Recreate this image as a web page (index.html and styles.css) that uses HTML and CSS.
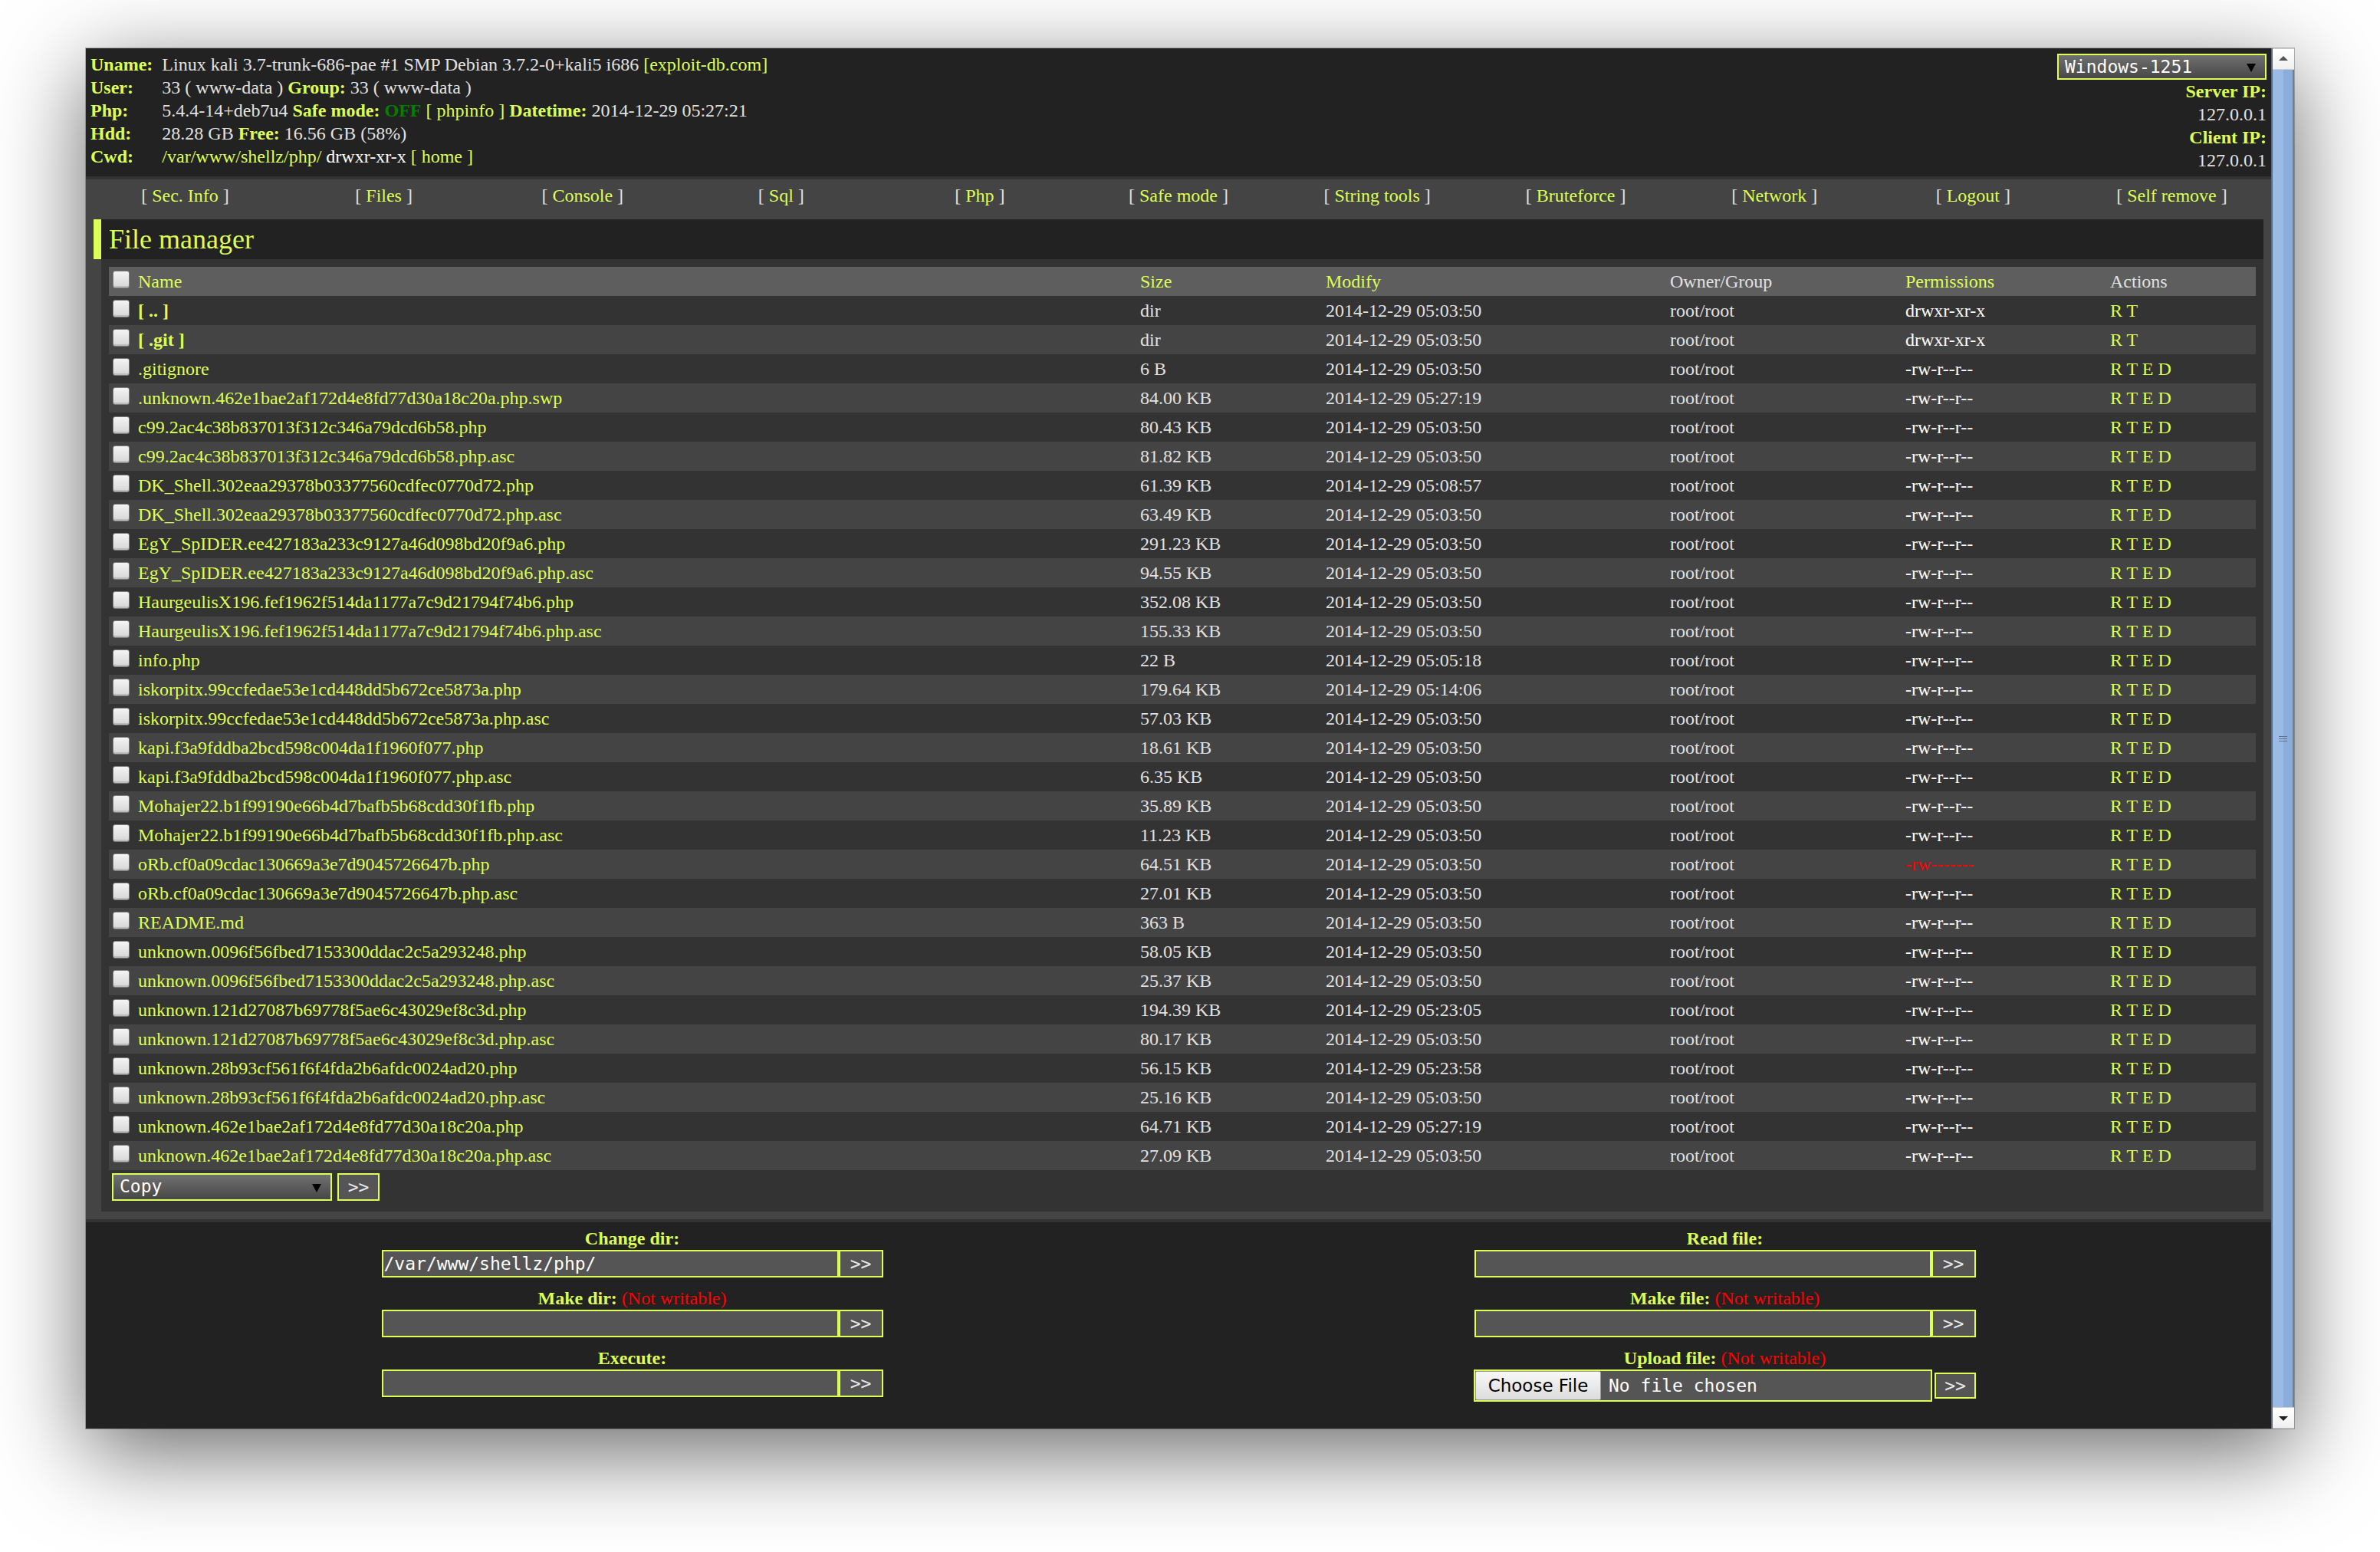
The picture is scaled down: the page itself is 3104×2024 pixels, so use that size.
FILE: index.html
```html
<!DOCTYPE html>
<html>
<head>
<meta charset="utf-8">
<title>WSO</title>
<link rel="stylesheet" href="styles.css">
</head>
<body>
<div class="window">
  <div class="page">
    <div class="info">
      <div class="labels">
        <span class="k">Uname:</span><br><span class="k">User:</span><br><span class="k">Php:</span><br><span class="k">Hdd:</span><br><span class="k">Cwd:</span>
      </div>
      <div class="vals">
        <div>Linux kali 3.7-trunk-686-pae #1 SMP Debian 3.7.2-0+kali5 i686 <a href="#">[exploit-db.com]</a></div>
        <div>33 ( www-data ) <span class="k">Group:</span> 33 ( www-data )</div>
        <div>5.4.4-14+deb7u4 <span class="k">Safe mode:</span> <b class="off">OFF</b> <a href="#">[ phpinfo ]</a> <span class="k">Datetime:</span> 2014-12-29 05:27:21</div>
        <div>28.28 GB <span class="k">Free:</span> 16.56 GB (58%)</div>
        <div><a href="#">/var/</a><a href="#">www/</a><a href="#">shellz/</a><a href="#">php/</a> <span class="wt">drwxr-xr-x</span> <a href="#">[ home ]</a></div>
      </div>
      <div class="right">
        <div class="sel charset">Windows-1251<i class="arr"></i></div>
        <div class="k">Server IP:</div>
        <div>127.0.0.1</div>
        <div class="k">Client IP:</div>
        <div>127.0.0.1</div>
      </div>
    </div>

    <nav class="menu">
      <div>[ <a href="#">Sec. Info</a> ]</div>
      <div>[ <a href="#">Files</a> ]</div>
      <div>[ <a href="#">Console</a> ]</div>
      <div>[ <a href="#">Sql</a> ]</div>
      <div>[ <a href="#">Php</a> ]</div>
      <div>[ <a href="#">Safe mode</a> ]</div>
      <div>[ <a href="#">String tools</a> ]</div>
      <div>[ <a href="#">Bruteforce</a> ]</div>
      <div>[ <a href="#">Network</a> ]</div>
      <div>[ <a href="#">Logout</a> ]</div>
      <div>[ <a href="#">Self remove</a> ]</div>
    </nav>

    <div class="wrap">
      <h1>File manager</h1>
      <div class="content">
        <table class="main">
          <colgroup>
            <col class="c-chk"><col class="c-name"><col class="c-size"><col class="c-mod"><col class="c-own"><col class="c-perm"><col class="c-act">
          </colgroup>
          <thead>
            <tr><th><input type="checkbox" class="chk"></th><th><a href="#">Name</a></th><th><a href="#">Size</a></th><th><a href="#">Modify</a></th><th>Owner/Group</th><th><a href="#">Permissions</a></th><th>Actions</th></tr>
          </thead>
          <tbody>
            <tr class="l2"><td><input type="checkbox" class="chk"></td><td><a href="#"><b>[ .. ]</b></a></td><td>dir</td><td>2014-12-29 05:03:50</td><td>root/root</td><td><a href="#" class="pw">drwxr-xr-x</a></td><td><a href="#">R</a> <a href="#">T</a></td></tr>
            <tr class="l1"><td><input type="checkbox" class="chk"></td><td><a href="#"><b>[ .git ]</b></a></td><td>dir</td><td>2014-12-29 05:03:50</td><td>root/root</td><td><a href="#" class="pw">drwxr-xr-x</a></td><td><a href="#">R</a> <a href="#">T</a></td></tr>
            <tr class="l2"><td><input type="checkbox" class="chk"></td><td><a href="#">.gitignore</a></td><td>6 B</td><td>2014-12-29 05:03:50</td><td>root/root</td><td><a href="#" class="pw">-rw-r--r--</a></td><td><a href="#">R</a> <a href="#">T</a> <a href="#">E</a> <a href="#">D</a></td></tr>
            <tr class="l1"><td><input type="checkbox" class="chk"></td><td><a href="#">.unknown.462e1bae2af172d4e8fd77d30a18c20a.php.swp</a></td><td>84.00 KB</td><td>2014-12-29 05:27:19</td><td>root/root</td><td><a href="#" class="pw">-rw-r--r--</a></td><td><a href="#">R</a> <a href="#">T</a> <a href="#">E</a> <a href="#">D</a></td></tr>
            <tr class="l2"><td><input type="checkbox" class="chk"></td><td><a href="#">c99.2ac4c38b837013f312c346a79dcd6b58.php</a></td><td>80.43 KB</td><td>2014-12-29 05:03:50</td><td>root/root</td><td><a href="#" class="pw">-rw-r--r--</a></td><td><a href="#">R</a> <a href="#">T</a> <a href="#">E</a> <a href="#">D</a></td></tr>
            <tr class="l1"><td><input type="checkbox" class="chk"></td><td><a href="#">c99.2ac4c38b837013f312c346a79dcd6b58.php.asc</a></td><td>81.82 KB</td><td>2014-12-29 05:03:50</td><td>root/root</td><td><a href="#" class="pw">-rw-r--r--</a></td><td><a href="#">R</a> <a href="#">T</a> <a href="#">E</a> <a href="#">D</a></td></tr>
            <tr class="l2"><td><input type="checkbox" class="chk"></td><td><a href="#">DK_Shell.302eaa29378b03377560cdfec0770d72.php</a></td><td>61.39 KB</td><td>2014-12-29 05:08:57</td><td>root/root</td><td><a href="#" class="pw">-rw-r--r--</a></td><td><a href="#">R</a> <a href="#">T</a> <a href="#">E</a> <a href="#">D</a></td></tr>
            <tr class="l1"><td><input type="checkbox" class="chk"></td><td><a href="#">DK_Shell.302eaa29378b03377560cdfec0770d72.php.asc</a></td><td>63.49 KB</td><td>2014-12-29 05:03:50</td><td>root/root</td><td><a href="#" class="pw">-rw-r--r--</a></td><td><a href="#">R</a> <a href="#">T</a> <a href="#">E</a> <a href="#">D</a></td></tr>
            <tr class="l2"><td><input type="checkbox" class="chk"></td><td><a href="#">EgY_SpIDER.ee427183a233c9127a46d098bd20f9a6.php</a></td><td>291.23 KB</td><td>2014-12-29 05:03:50</td><td>root/root</td><td><a href="#" class="pw">-rw-r--r--</a></td><td><a href="#">R</a> <a href="#">T</a> <a href="#">E</a> <a href="#">D</a></td></tr>
            <tr class="l1"><td><input type="checkbox" class="chk"></td><td><a href="#">EgY_SpIDER.ee427183a233c9127a46d098bd20f9a6.php.asc</a></td><td>94.55 KB</td><td>2014-12-29 05:03:50</td><td>root/root</td><td><a href="#" class="pw">-rw-r--r--</a></td><td><a href="#">R</a> <a href="#">T</a> <a href="#">E</a> <a href="#">D</a></td></tr>
            <tr class="l2"><td><input type="checkbox" class="chk"></td><td><a href="#">HaurgeulisX196.fef1962f514da1177a7c9d21794f74b6.php</a></td><td>352.08 KB</td><td>2014-12-29 05:03:50</td><td>root/root</td><td><a href="#" class="pw">-rw-r--r--</a></td><td><a href="#">R</a> <a href="#">T</a> <a href="#">E</a> <a href="#">D</a></td></tr>
            <tr class="l1"><td><input type="checkbox" class="chk"></td><td><a href="#">HaurgeulisX196.fef1962f514da1177a7c9d21794f74b6.php.asc</a></td><td>155.33 KB</td><td>2014-12-29 05:03:50</td><td>root/root</td><td><a href="#" class="pw">-rw-r--r--</a></td><td><a href="#">R</a> <a href="#">T</a> <a href="#">E</a> <a href="#">D</a></td></tr>
            <tr class="l2"><td><input type="checkbox" class="chk"></td><td><a href="#">info.php</a></td><td>22 B</td><td>2014-12-29 05:05:18</td><td>root/root</td><td><a href="#" class="pw">-rw-r--r--</a></td><td><a href="#">R</a> <a href="#">T</a> <a href="#">E</a> <a href="#">D</a></td></tr>
            <tr class="l1"><td><input type="checkbox" class="chk"></td><td><a href="#">iskorpitx.99ccfedae53e1cd448dd5b672ce5873a.php</a></td><td>179.64 KB</td><td>2014-12-29 05:14:06</td><td>root/root</td><td><a href="#" class="pw">-rw-r--r--</a></td><td><a href="#">R</a> <a href="#">T</a> <a href="#">E</a> <a href="#">D</a></td></tr>
            <tr class="l2"><td><input type="checkbox" class="chk"></td><td><a href="#">iskorpitx.99ccfedae53e1cd448dd5b672ce5873a.php.asc</a></td><td>57.03 KB</td><td>2014-12-29 05:03:50</td><td>root/root</td><td><a href="#" class="pw">-rw-r--r--</a></td><td><a href="#">R</a> <a href="#">T</a> <a href="#">E</a> <a href="#">D</a></td></tr>
            <tr class="l1"><td><input type="checkbox" class="chk"></td><td><a href="#">kapi.f3a9fddba2bcd598c004da1f1960f077.php</a></td><td>18.61 KB</td><td>2014-12-29 05:03:50</td><td>root/root</td><td><a href="#" class="pw">-rw-r--r--</a></td><td><a href="#">R</a> <a href="#">T</a> <a href="#">E</a> <a href="#">D</a></td></tr>
            <tr class="l2"><td><input type="checkbox" class="chk"></td><td><a href="#">kapi.f3a9fddba2bcd598c004da1f1960f077.php.asc</a></td><td>6.35 KB</td><td>2014-12-29 05:03:50</td><td>root/root</td><td><a href="#" class="pw">-rw-r--r--</a></td><td><a href="#">R</a> <a href="#">T</a> <a href="#">E</a> <a href="#">D</a></td></tr>
            <tr class="l1"><td><input type="checkbox" class="chk"></td><td><a href="#">Mohajer22.b1f99190e66b4d7bafb5b68cdd30f1fb.php</a></td><td>35.89 KB</td><td>2014-12-29 05:03:50</td><td>root/root</td><td><a href="#" class="pw">-rw-r--r--</a></td><td><a href="#">R</a> <a href="#">T</a> <a href="#">E</a> <a href="#">D</a></td></tr>
            <tr class="l2"><td><input type="checkbox" class="chk"></td><td><a href="#">Mohajer22.b1f99190e66b4d7bafb5b68cdd30f1fb.php.asc</a></td><td>11.23 KB</td><td>2014-12-29 05:03:50</td><td>root/root</td><td><a href="#" class="pw">-rw-r--r--</a></td><td><a href="#">R</a> <a href="#">T</a> <a href="#">E</a> <a href="#">D</a></td></tr>
            <tr class="l1"><td><input type="checkbox" class="chk"></td><td><a href="#">oRb.cf0a09cdac130669a3e7d9045726647b.php</a></td><td>64.51 KB</td><td>2014-12-29 05:03:50</td><td>root/root</td><td><a href="#" class="pw red">-rw-------</a></td><td><a href="#">R</a> <a href="#">T</a> <a href="#">E</a> <a href="#">D</a></td></tr>
            <tr class="l2"><td><input type="checkbox" class="chk"></td><td><a href="#">oRb.cf0a09cdac130669a3e7d9045726647b.php.asc</a></td><td>27.01 KB</td><td>2014-12-29 05:03:50</td><td>root/root</td><td><a href="#" class="pw">-rw-r--r--</a></td><td><a href="#">R</a> <a href="#">T</a> <a href="#">E</a> <a href="#">D</a></td></tr>
            <tr class="l1"><td><input type="checkbox" class="chk"></td><td><a href="#">README.md</a></td><td>363 B</td><td>2014-12-29 05:03:50</td><td>root/root</td><td><a href="#" class="pw">-rw-r--r--</a></td><td><a href="#">R</a> <a href="#">T</a> <a href="#">E</a> <a href="#">D</a></td></tr>
            <tr class="l2"><td><input type="checkbox" class="chk"></td><td><a href="#">unknown.0096f56fbed7153300ddac2c5a293248.php</a></td><td>58.05 KB</td><td>2014-12-29 05:03:50</td><td>root/root</td><td><a href="#" class="pw">-rw-r--r--</a></td><td><a href="#">R</a> <a href="#">T</a> <a href="#">E</a> <a href="#">D</a></td></tr>
            <tr class="l1"><td><input type="checkbox" class="chk"></td><td><a href="#">unknown.0096f56fbed7153300ddac2c5a293248.php.asc</a></td><td>25.37 KB</td><td>2014-12-29 05:03:50</td><td>root/root</td><td><a href="#" class="pw">-rw-r--r--</a></td><td><a href="#">R</a> <a href="#">T</a> <a href="#">E</a> <a href="#">D</a></td></tr>
            <tr class="l2"><td><input type="checkbox" class="chk"></td><td><a href="#">unknown.121d27087b69778f5ae6c43029ef8c3d.php</a></td><td>194.39 KB</td><td>2014-12-29 05:23:05</td><td>root/root</td><td><a href="#" class="pw">-rw-r--r--</a></td><td><a href="#">R</a> <a href="#">T</a> <a href="#">E</a> <a href="#">D</a></td></tr>
            <tr class="l1"><td><input type="checkbox" class="chk"></td><td><a href="#">unknown.121d27087b69778f5ae6c43029ef8c3d.php.asc</a></td><td>80.17 KB</td><td>2014-12-29 05:03:50</td><td>root/root</td><td><a href="#" class="pw">-rw-r--r--</a></td><td><a href="#">R</a> <a href="#">T</a> <a href="#">E</a> <a href="#">D</a></td></tr>
            <tr class="l2"><td><input type="checkbox" class="chk"></td><td><a href="#">unknown.28b93cf561f6f4fda2b6afdc0024ad20.php</a></td><td>56.15 KB</td><td>2014-12-29 05:23:58</td><td>root/root</td><td><a href="#" class="pw">-rw-r--r--</a></td><td><a href="#">R</a> <a href="#">T</a> <a href="#">E</a> <a href="#">D</a></td></tr>
            <tr class="l1"><td><input type="checkbox" class="chk"></td><td><a href="#">unknown.28b93cf561f6f4fda2b6afdc0024ad20.php.asc</a></td><td>25.16 KB</td><td>2014-12-29 05:03:50</td><td>root/root</td><td><a href="#" class="pw">-rw-r--r--</a></td><td><a href="#">R</a> <a href="#">T</a> <a href="#">E</a> <a href="#">D</a></td></tr>
            <tr class="l2"><td><input type="checkbox" class="chk"></td><td><a href="#">unknown.462e1bae2af172d4e8fd77d30a18c20a.php</a></td><td>64.71 KB</td><td>2014-12-29 05:27:19</td><td>root/root</td><td><a href="#" class="pw">-rw-r--r--</a></td><td><a href="#">R</a> <a href="#">T</a> <a href="#">E</a> <a href="#">D</a></td></tr>
            <tr class="l1"><td><input type="checkbox" class="chk"></td><td><a href="#">unknown.462e1bae2af172d4e8fd77d30a18c20a.php.asc</a></td><td>27.09 KB</td><td>2014-12-29 05:03:50</td><td>root/root</td><td><a href="#" class="pw">-rw-r--r--</a></td><td><a href="#">R</a> <a href="#">T</a> <a href="#">E</a> <a href="#">D</a></td></tr>
          </tbody>
        </table>
        <div class="bulk">
          <div class="sel copy">Copy<i class="arr"></i></div>
          <button class="btn" type="button">&gt;&gt;</button>
        </div>
      </div>
    </div>

    <div class="tools">
      <div class="cell">
        <div class="lbl"><span class="k">Change dir:</span></div>
        <div class="frm"><input class="inp" type="text" value="/var/www/shellz/php/"><button class="btn" type="button">&gt;&gt;</button></div>
      </div>
      <div class="cell">
        <div class="lbl"><span class="k">Read file:</span></div>
        <div class="frm"><input class="inp" type="text"><button class="btn" type="button">&gt;&gt;</button></div>
      </div>
      <div class="cell">
        <div class="lbl"><span class="k">Make dir:</span> <span class="nw">(Not writable)</span></div>
        <div class="frm"><input class="inp" type="text"><button class="btn" type="button">&gt;&gt;</button></div>
      </div>
      <div class="cell">
        <div class="lbl"><span class="k">Make file:</span> <span class="nw">(Not writable)</span></div>
        <div class="frm"><input class="inp" type="text"><button class="btn" type="button">&gt;&gt;</button></div>
      </div>
      <div class="cell">
        <div class="lbl"><span class="k">Execute:</span></div>
        <div class="frm"><input class="inp" type="text"><button class="btn" type="button">&gt;&gt;</button></div>
      </div>
      <div class="cell">
        <div class="lbl"><span class="k">Upload file:</span> <span class="nw">(Not writable)</span></div>
        <div class="frm up"><div class="file"><span class="choose">Choose File</span><span class="nofile">No file chosen</span></div><button class="btn small" type="button">&gt;&gt;</button></div>
      </div>
    </div>
  </div>

  <div class="scrollbar">
    <div class="sb-btn up"></div>
    <div class="sb-thumb"><i class="grip"></i></div>
    <div class="sb-btn down"></div>
  </div>
</div>
</body>
</html>
```

FILE: styles.css
```css
html, body {
  margin: 0;
  padding: 0;
}
body {
  background: #ffffff;
  width: 3104px;
  height: 2024px;
  box-sizing: border-box;
  padding: 63px 0 0 112px;
  overflow: hidden;
}
.window {
  width: 2880px;
  height: 1800px;
  display: flex;
  background: #444;
  box-shadow: 0 30px 110px rgba(0, 0, 0, 0.6), 0 0 0 1px rgba(0, 0, 0, 0.25);
}
.page {
  flex: 1;
  min-width: 0;
  display: flex;
  flex-direction: column;
  overflow: hidden;
  background: #444;
  font: 24px/30px "Liberation Serif", "Times New Roman", serif;
  color: #e1e1e1;
}
a {
  color: #ddff55;
  text-decoration: none;
}
.k {
  color: #ddff55;
  font-weight: bold;
}
.off {
  color: #008000;
}
.wt {
  color: #ffffff;
}
.nw {
  color: #ff0000;
}

/* info header */
.info {
  display: grid;
  grid-template-columns: auto 1fr auto;
  background: #222;
}
.info > div {
  padding: 6px;
  white-space: nowrap;
}
.right {
  text-align: right;
  display: flex;
  flex-direction: column;
  align-items: flex-end;
}
.sel {
  position: relative;
  box-sizing: border-box;
  height: 34px;
  border: 2px solid #ddff55;
  background: linear-gradient(#707070, #474747);
  color: #fff;
  font: 23px/30px "DejaVu Sans Mono", monospace;
  padding-left: 8px;
  text-align: left;
}
.charset {
  width: 273px;
  margin: 1px 0 0;
}
.arr {
  position: absolute;
  right: 12px;
  top: 11px;
  width: 0;
  height: 0;
  border-left: 6px solid transparent;
  border-right: 6px solid transparent;
  border-top: 11px solid #000;
}

/* menu */
.menu {
  display: grid;
  grid-template-columns: repeat(11, 1fr);
  border-top: 4px solid #333;
  background: #444;
}
.menu > div {
  padding: 6px;
  text-align: center;
  white-space: nowrap;
}

/* file manager */
.wrap {
  margin: 10px;
}
h1 {
  margin: 0;
  border-left: 10px solid #ddff55;
  padding: 4px 10px;
  font: normal 36px/44px "Liberation Serif", "Times New Roman", serif;
  color: #ddff55;
  background: #222;
}
.content {
  margin-left: 10px;
  padding: 10px;
  background: #333;
}
.main {
  width: 100%;
  table-layout: fixed;
  border-collapse: separate;
  border-spacing: 0;
}
.c-chk { width: 34px; }
.c-name { width: 1307px; }
.c-size { width: 242px; }
.c-mod { width: 449px; }
.c-own { width: 307px; }
.c-perm { width: 267px; }
.c-act { width: 194px; }
.main th,
.main td {
  padding: 4px;
  height: 30px;
  line-height: 30px;
  text-align: left;
  vertical-align: top;
  font-weight: normal;
  white-space: nowrap;
  overflow: hidden;
}
.main th {
  background: #5e5e5e;
}
.main td b {
  font-weight: bold;
}
.l1 { background: #444; }
.l2 { background: #333; }
.pw { color: #ffffff; }
.pw.red { color: #ff0000; }
.chk {
  -webkit-appearance: none;
  appearance: none;
  display: block;
  box-sizing: border-box;
  width: 22px;
  height: 23px;
  margin: 1px 0 0 1px;
  border: 1px solid #7c7c7c;
  border-radius: 3px;
  background: linear-gradient(#f4f4f4, #d6d6d6);
  box-shadow: inset 0 -2px 0 rgba(0, 0, 0, 0.12);
}
.bulk {
  display: flex;
  gap: 7px;
  padding: 4px;
  height: 36px;
}
.copy {
  width: 287px;
  height: 36px;
}
.copy .arr {
  top: 12px;
}
.btn {
  box-sizing: border-box;
  height: 36px;
  width: 55px;
  margin: 0;
  padding: 0;
  border: 2px solid #ddff55;
  background: #555;
  color: #e8e8e8;
  font: 23px/30px "DejaVu Sans Mono", monospace;
}

/* tools */
.tools {
  flex: 1;
  display: grid;
  grid-template-columns: 1fr 1fr;
  grid-auto-rows: 78px;
  align-content: start;
  background: #222;
  border-top: 4px solid #333;
}
.tools .cell {
  padding: 6px;
  text-align: center;
}
.lbl {
  height: 30px;
  white-space: nowrap;
}
.frm {
  display: flex;
  justify-content: center;
  align-items: center;
}
.inp {
  box-sizing: border-box;
  width: 596px;
  height: 36px;
  margin: 0;
  padding: 0 0 0 1px;
  border: 2px solid #ddff55;
  background: #555;
  color: #fff;
  font: 23px "DejaVu Sans Mono", monospace;
  outline: none;
}
.frm .btn {
  width: 58px;
}
.file {
  box-sizing: border-box;
  width: 598px;
  height: 42px;
  border: 2px solid #ddff55;
  background: #555;
  display: flex;
  align-items: stretch;
  text-align: left;
}
.choose {
  box-sizing: border-box;
  width: 164px;
  border: 1px solid #9a9a9a;
  border-radius: 2px;
  background: linear-gradient(#f8f8f8, #dcdcdc);
  color: #000;
  font: 23px/36px "DejaVu Sans", sans-serif;
  text-align: center;
}
.nofile {
  padding-left: 10px;
  color: #fff;
  font: 23px/38px "DejaVu Sans Mono", monospace;
}
.frm.up .btn.small {
  width: 54px;
  height: 34px;
  margin-left: 3px;
}

/* scrollbar */
.scrollbar {
  width: 30px;
  flex: none;
  display: flex;
  flex-direction: column;
  background: #fff;
  border-left: 2px solid #5d6b7d;
  box-sizing: border-box;
}
.sb-btn {
  position: relative;
  height: 28px;
  flex: none;
  background: linear-gradient(#ffffff, #f0f0f0);
  border-top: 1px solid #cfcfcf;
  border-bottom: 1px solid #cfcfcf;
  box-sizing: border-box;
}
.sb-btn::after {
  content: "";
  position: absolute;
  left: 8px;
  width: 0;
  height: 0;
  border-left: 6px solid transparent;
  border-right: 6px solid transparent;
}
.sb-btn.up::after {
  top: 9px;
  border-bottom: 6px solid #555;
}
.sb-btn.down::after {
  top: 11px;
  border-top: 6px solid #222;
}
.sb-thumb {
  position: relative;
  flex: 1;
  background: linear-gradient(to right, #9abbe6 0, #9abbe6 55%, #8aadda 55%, #8aadda 100%);
  border-right: 2px solid #6f7f92;
}
.grip {
  position: absolute;
  left: 8px;
  top: 50%;
  width: 11px;
  height: 5px;
  margin-top: -3px;
  border-top: 1px solid #5f7390;
  border-bottom: 1px solid #5f7390;
}
.grip::after {
  content: "";
  position: absolute;
  left: 0;
  right: 0;
  top: 2px;
  border-top: 1px solid #5f7390;
}
```
